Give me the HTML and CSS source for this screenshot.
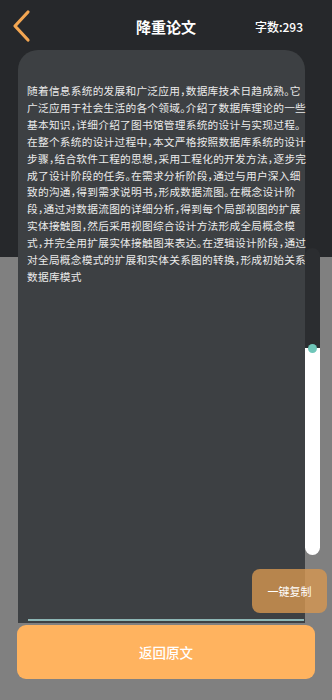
FILE: index.html
```html
<!DOCTYPE html>
<html lang="zh">
<head>
    <meta charset="UTF-8">
    <meta name="viewport" content="width=device-width, initial-scale=1.0">
    <title>降重论文</title>
    <link rel="stylesheet" href="styles.css">
</head>
<body>
<div id="wrap">
    <header class="nav_bar">
        <div class="btn_back">
            <svg width="20" height="36" viewBox="0 0 20 36">
                <polyline points="16,3 3,17 16,31" fill="none" stroke="#f3a652" stroke-width="3.2" stroke-linecap="round" stroke-linejoin="round"/>
            </svg>
        </div>
        <div class="nav_title">降重论文</div>
        <div class="word_cnt">字数:293</div>
    </header>

    <div class="content_row">
        <div class="card">
            <p class="article">随着信息系统的发展和广泛应用，数据库技术日趋成熟。它<br>广泛应用于社会生活的各个领域。介绍了数据库理论的一些<br>基本知识，详细介绍了图书馆管理系统的设计与实现过程。<br>在整个系统的设计过程中，本文严格按照数据库系统的设计<br>步骤，结合软件工程的思想，采用工程化的开发方法，逐步完<br>成了设计阶段的任务。在需求分析阶段，通过与用户深入细<br>致的沟通，得到需求说明书，形成数据流图。在概念设计阶<br>段，通过对数据流图的详细分析，得到每个局部视图的扩展<br>实体接触图，然后采用视图综合设计方法形成全局概念模<br>式，并完全用扩展实体接触图来表达。在逻辑设计阶段，通过<br>对全局概念模式的扩展和实体关系图的转换，形成初始关系<br>数据库模式</p>
            <div class="input_line"></div>
        </div>
        <div class="scroll_side">
            <div class="scroll_track"></div>
            <div class="scroll_thumb">
                <span class="scroll_dot"></span>
            </div>
        </div>
    </div>

    <div class="btn_copy">一键复制</div>
    <div class="btn_back_origin">返回原文</div>
</div>
</body>
</html>
```

FILE: styles.css
```css
body {
    margin: 0;
    font-family: "Noto Sans CJK SC", "Noto Sans", sans-serif;
    background: #808080;
}
#wrap {
    width: 332px;
    height: 700px;
    position: relative;
    background: linear-gradient(#26282b 0, #26282b 257px, #808080 257px);
}

.nav_bar {
    height: 50px;
    padding-top: 3px;
    box-sizing: border-box;
    display: flex;
    align-items: center;
    position: relative;
}
.btn_back {
    width: 20px;
    height: 36px;
    margin-left: 12px;
}
.nav_title {
    position: absolute;
    left: 0;
    right: 0;
    top: 3px;
    bottom: 0;
    display: flex;
    justify-content: center;
    align-items: center;
    color: #fff;
    font-size: 15px;
    font-weight: 700;
    pointer-events: none;
}
.word_cnt {
    margin-left: auto;
    margin-right: 29px;
    color: #fff;
    font-size: 12px;
    font-weight: 500;
}

.content_row {
    display: flex;
    margin-left: 18px;
}
.card {
    width: 287px;
    height: 573px;
    background: #3d4043;
    border-radius: 20px 20px 0 0;
    display: flex;
    flex-direction: column;
}
.article {
    margin: 0;
    padding: 33px 0 0 9px;
    color: #ebebeb;
    font-size: 10.7px;
    line-height: 16.9px;
    letter-spacing: 0.25px;
    white-space: nowrap;
    font-feature-settings: "halt";
}
.input_line {
    margin: auto 0 2px 10px;
    width: 276px;
    height: 2px;
    background: #8db7b6;
}

.scroll_side {
    width: 15px;
    padding-top: 198px;
    display: flex;
    flex-direction: column;
}
.scroll_track {
    height: 100px;
    background: #2b2d30;
    border-radius: 8px 8px 0 0;
}
.scroll_thumb {
    height: 207px;
    background: #fff;
    border-radius: 0 0 8px 8px;
    position: relative;
}
.scroll_dot {
    position: absolute;
    left: 3px;
    top: -4px;
    width: 9px;
    height: 9px;
    border-radius: 50%;
    background: #6fc6b9;
}

.btn_copy {
    position: absolute;
    left: 252px;
    top: 569px;
    width: 75px;
    height: 44px;
    border-radius: 8px;
    background: rgba(214, 150, 80, 0.8);
    color: #fff;
    font-size: 11px;
    display: flex;
    justify-content: center;
    align-items: center;
}
.btn_back_origin {
    width: 298px;
    height: 54px;
    margin: 2px 0 0 17px;
    border-radius: 9px;
    background: #ffb35f;
    color: #fff;
    font-size: 13.5px;
    font-weight: 500;
    display: flex;
    justify-content: center;
    align-items: center;
}
```
